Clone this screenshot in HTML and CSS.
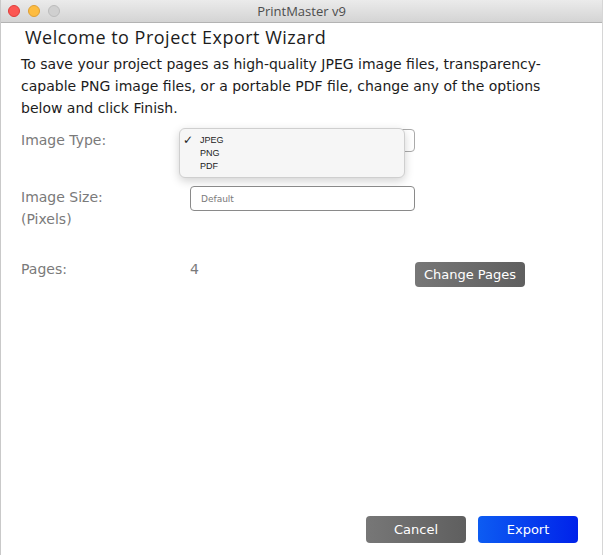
FILE: index.html
```html
<!DOCTYPE html>
<html lang="en">
<head>
    <meta charset="UTF-8">
    <title>PrintMaster v9</title>
    <link rel="stylesheet" href="styles.css">
</head>
<body>
    <div class="window">
        <div class="titlebar">
            <div class="lights">
                <span class="light red"></span>
                <span class="light yellow"></span>
                <span class="light off"></span>
            </div>
            <div class="title">PrintMaster v9</div>
        </div>
        <main class="content">
            <h1>Welcome to Project Export Wizard</h1>
            <p class="intro">To save your project pages as high-quality JPEG image files, transparency-capable PNG image files, or a portable PDF file, change any of the options below and click Finish.</p>

            <div class="form">
                <div class="label">Image Type:</div>
                <div class="field">
                    <div class="select"></div>
                    <ul class="menu">
                        <li class="checked"><span class="check">&#10003;</span>JPEG</li>
                        <li><span class="check"></span>PNG</li>
                        <li><span class="check"></span>PDF</li>
                    </ul>
                </div>

                <div class="label">Image Size:<br>(Pixels)</div>
                <div class="field size-field">
                    <input class="text-input" type="text" placeholder="Default">
                </div>

                <div class="label pages-label">Pages:</div>
                <div class="field pages-field">
                    <span class="count">4</span>
                    <button class="btn gray small">Change Pages</button>
                </div>
            </div>
        </main>
        <footer class="actions">
            <button class="btn gray">Cancel</button>
            <button class="btn blue">Export</button>
        </footer>
    </div>
</body>
</html>
```

FILE: styles.css
```css
body {
    margin: 0;
    font-family: "DejaVu Sans", sans-serif;
    background: #fff;
}
.window {
    width: 603px;
    height: 555px;
    box-sizing: border-box;
    border-left: 1px solid #c9c9c9;
    border-right: 1px solid #d6d6d6;
    display: flex;
    flex-direction: column;
    background: #fff;
}
.titlebar {
    height: 22px;
    position: relative;
    background: linear-gradient(#ebebeb, #d4d4d4);
    border-bottom: 1px solid #b3b3b3;
    display: flex;
    align-items: center;
    justify-content: center;
    flex-shrink: 0;
}
.lights {
    position: absolute;
    left: 7px;
    top: 5px;
    display: flex;
    gap: 8px;
}
.light {
    width: 12px;
    height: 12px;
    border-radius: 50%;
    box-sizing: border-box;
}
.red { background: #fc5753; border: 1px solid #df3d3a; }
.yellow { background: #fdbc40; border: 1px solid #de9f34; }
.off { background: #d0d0d0; border: 1px solid #bcbcbc; }
.title {
    font-family: "Open Sans", sans-serif;
    font-size: 13px;
    color: #4d4d4d;
}
.content {
    flex: 1;
    padding: 2px 20px 0 20px;
}
h1 {
    margin: 0 0 0 4px;
    font-family: "Open Sans", sans-serif;
    font-size: 18px;
    font-weight: 400;
    letter-spacing: 0.5px;
    color: #1c1c1c;
    line-height: 24px;
}
.intro {
    margin: 4px 0 0 0;
    font-size: 14px;
    line-height: 22px;
    color: #1c1c1c;
}
.form {
    display: grid;
    grid-template-columns: 169px 1fr;
    row-gap: 0;
    margin-top: 10px;
}
.label {
    font-size: 14px;
    color: #7a7a7a;
    line-height: 22px;
}
.field {
    position: relative;
    height: 57px;
}
.size-field {
    height: 72px;
}
.select {
    width: 225px;
    height: 23px;
    box-sizing: border-box;
    border: 1px solid #aaa;
    border-radius: 4px;
}
.menu {
    position: absolute;
    left: -11px;
    top: -1px;
    width: 226px;
    margin: 0;
    padding: 5px 0 4px 0;
    list-style: none;
    background: #f6f6f6;
    border: 1px solid #cfcfcf;
    border-radius: 6px;
    box-shadow: 0 3px 10px rgba(0,0,0,0.18);
    box-sizing: border-box;
}
.menu li {
    font-family: "Liberation Sans", Arial, sans-serif;
    font-size: 9px;
    line-height: 13px;
    color: #222;
    display: flex;
    align-items: center;
}
.check {
    width: 20px;
    padding-left: 3px;
    box-sizing: border-box;
    font-size: 12px;
    font-family: "DejaVu Sans", sans-serif;
}
.text-input {
    width: 225px;
    height: 25px;
    box-sizing: border-box;
    border: 1px solid #8a8a8a;
    border-radius: 4px;
    padding: 0 10px;
    font-family: "DejaVu Sans", sans-serif;
    font-size: 9px;
    outline: none;
}
.text-input::placeholder {
    color: #7a7a7a;
}
.pages-field {
    display: flex;
    align-items: flex-start;
}
.count {
    font-size: 14px;
    color: #7a7a7a;
    line-height: 22px;
    width: 225px;
}
.btn {
    border: none;
    border-radius: 4px;
    color: #fff;
    font-family: "DejaVu Sans", sans-serif;
    font-size: 13px;
    cursor: pointer;
    width: 100px;
    height: 27px;
    padding: 0;
}
.btn.small {
    width: 110px;
    height: 25px;
    margin-top: 4px;
}
.gray {
    background: linear-gradient(90deg, #777, #5f5f5f);
}
.blue {
    background: linear-gradient(90deg, #0d5cf2, #0022ea);
}
.actions {
    display: flex;
    justify-content: flex-end;
    gap: 12px;
    padding: 0 24px 12px 0;
}
```
